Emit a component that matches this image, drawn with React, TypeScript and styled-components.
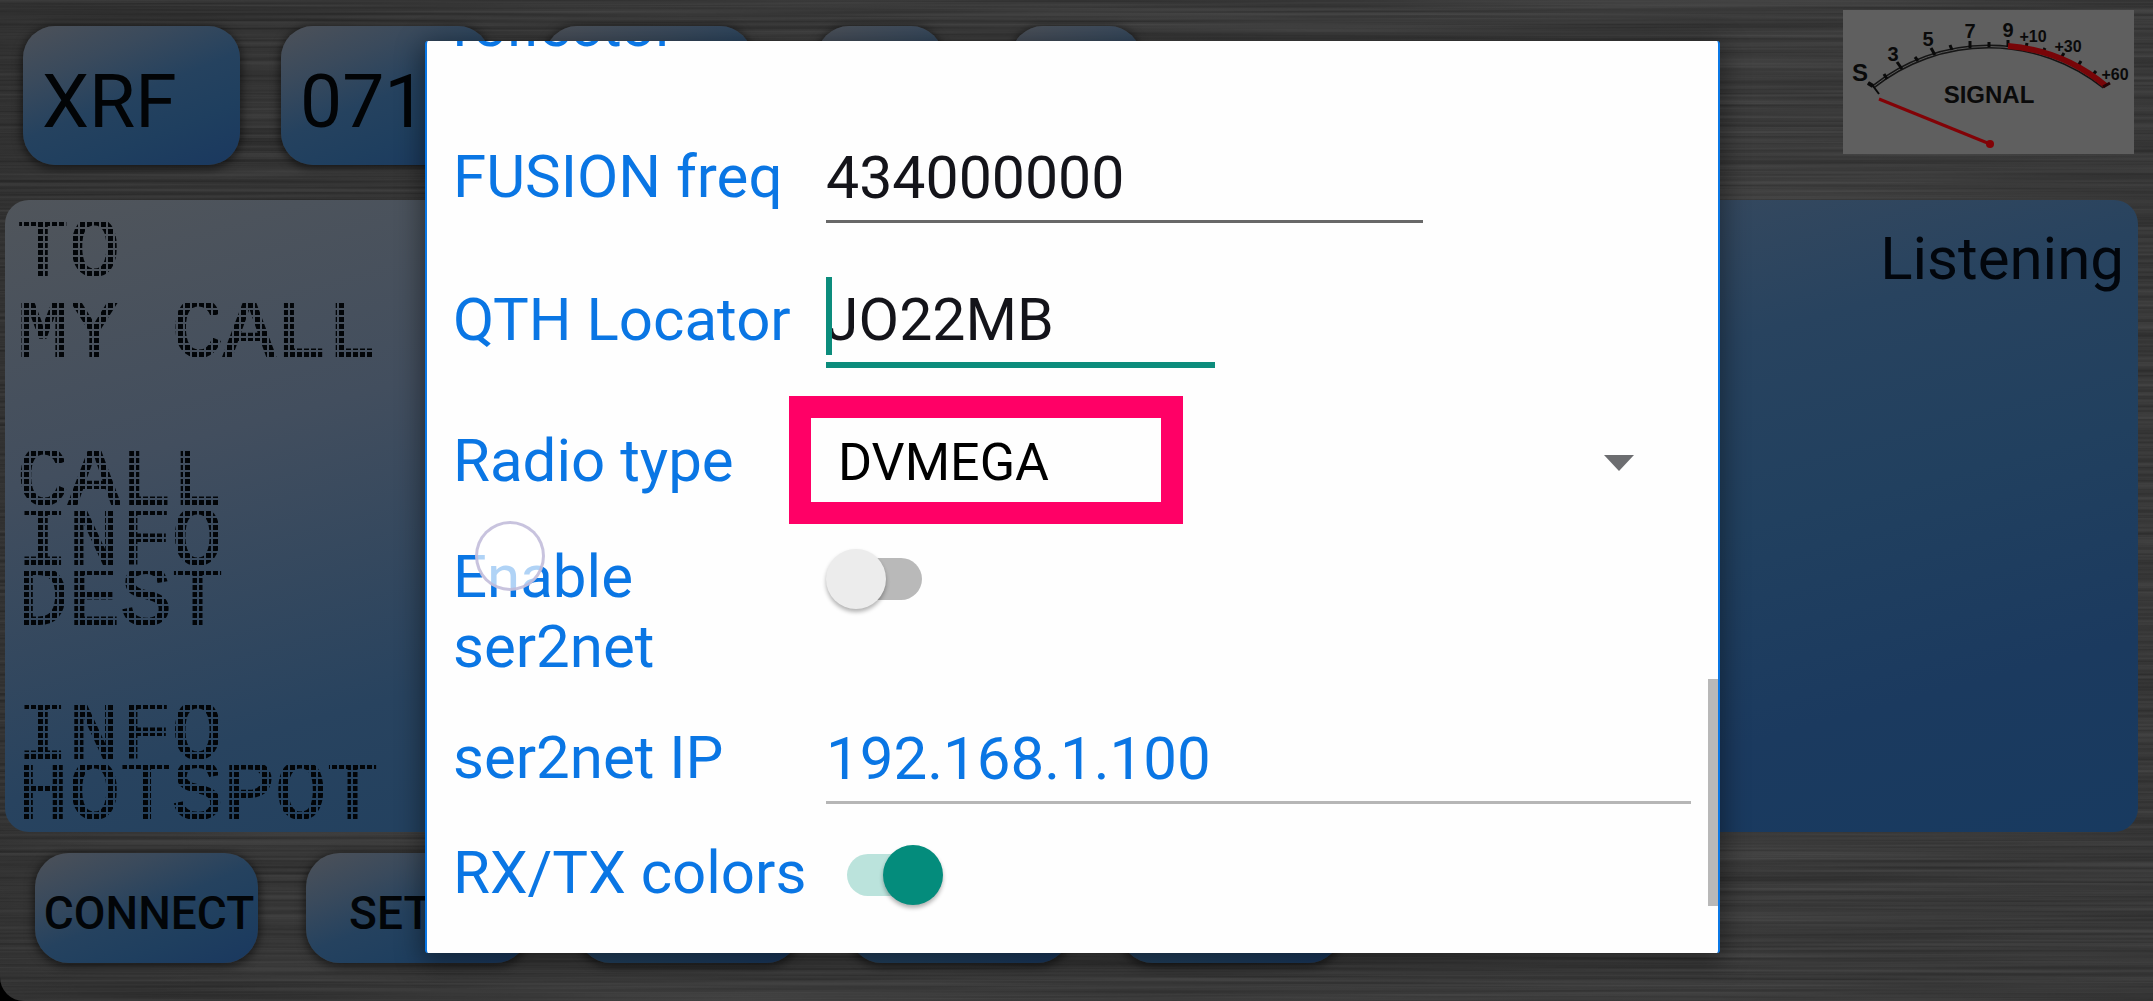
import React from 'react';
import styled, { createGlobalStyle, css } from 'styled-components';

const GlobalStyle = createGlobalStyle`
  *, *::before, *::after { box-sizing: border-box; }
  body { margin: 0; background: #000; font-family: Roboto, "Open Sans", sans-serif; }
  button, input, select { font-family: inherit; margin: 0; }
`;

const glass = css`
  background: linear-gradient(158deg, #4a5059 4%, #3a4a5c 26%, #25425f 50%, #1f3f5f 72%, #1a385f 100%);
`;

const Screen = styled.main`
  position: relative;
  display: flex;
  flex-direction: column;
  min-height: 100vh;
  overflow: hidden;
  border-bottom-left-radius: 24px;
  background: linear-gradient(100deg, #2e2e2e 0%, #393939 30%, #3c3c3c 70%, #363636 100%);
`;

const Brushed = styled.svg`
  position: absolute;
  inset: 0;
  width: 100%;
  height: 100%;
  opacity: 0.22;
`;

const TopBar = styled.header`
  position: relative;
  display: flex;
  justify-content: space-between;
  align-items: flex-start;
  height: 200px;
  padding: 10px 19px 0 23px;
`;

const Selectors = styled.div`
  display: grid;
  grid-template-columns: 258px 264px 272px 194px 130px;
  padding-top: 16px;
`;

const SelectorButton = styled.button<{ $width: number }>`
  ${glass}
  width: ${p => p.$width}px;
  height: 139px;
  padding: 10px 19px 0;
  border: 0;
  border-radius: 32px;
  box-shadow: 0 2px 8px 2px rgba(0, 0, 0, 0.5);
  color: #020406;
  font-size: 75px;
  line-height: 90px;
  text-align: left;
`;

const Meter = styled.svg`
  width: 291px;
  height: 144px;
  background: #5f5f5f;
`;

const Display = styled.section`
  position: relative;
  flex: 1;
  display: flex;
  justify-content: space-between;
  align-items: flex-start;
  margin: 0 15px 0 5px;
  padding: 10px 14px 0 12px;
  border-radius: 24px;
  background: linear-gradient(165deg, #50555b 0%, #424e5e 24%, #28435f 50%, #21405f 66%, #1b3a5f 84%, #183a60 100%);
`;

const Lines = styled.div`
  display: flex;
  flex-direction: column;
  padding-top: 12px;
`;

const LcdLine = styled.div<{ $gap?: number }>`
  height: 60px;
  margin-bottom: ${p => p.$gap ?? 0}px;
  color: #020508;
  font-family: "Liberation Mono", monospace;
  font-size: 86px;
  line-height: 60px;
  white-space: pre;
  -webkit-text-stroke: 2px #020508;
  mask-image: repeating-linear-gradient(90deg, #000 0 5px, transparent 5px 7px),
    repeating-linear-gradient(180deg, #000 0 5px, transparent 5px 7px);
  mask-composite: intersect;
`;

const Status = styled.div`
  padding-top: 14px;
  color: #02060c;
  font-size: 60px;
  line-height: 70px;
`;

const BottomBar = styled.footer`
  position: relative;
  display: flex;
  gap: 48px;
  height: 169px;
  padding: 21px 35px 0;
`;

const ActionButton = styled.button`
  ${glass}
  width: 223px;
  height: 110px;
  padding: 10px 0 0 5px;
  border: 0;
  border-radius: 34px;
  box-shadow: 0 2px 8px 2px rgba(0, 0, 0, 0.5);
  color: #020508;
  font-size: 46px;
  font-weight: 500;
  line-height: 52px;
  white-space: nowrap;
`;

const Overlay = styled.div`
  position: fixed;
  inset: 0;
  display: flex;
  padding: 41px 433px 48px 425px;
`;

const Dialog = styled.form`
  position: relative;
  flex: 1;
  min-width: 0;
  overflow: hidden;
  padding: 0 27px 0 26px;
  border: solid #0a78e6;
  border-width: 0 2px;
  border-radius: 3px;
  background: #fefefe;
  box-shadow: 0 6px 26px 4px rgba(0, 0, 0, 0.4);
`;

const Row = styled.div<{ $height: number }>`
  display: grid;
  grid-template-columns: 373px minmax(0, 1fr);
  align-items: start;
  height: ${p => p.$height}px;
`;

const ScrolledRow = styled(Row)`
  margin-top: -50px;
`;

const Label = styled.label`
  color: #0a76e4;
  font-size: 60px;
  line-height: 70px;
`;

const Field = styled.div<{ $width?: string }>`
  position: relative;
  width: ${p => p.$width ?? '100%'};
`;

const TextBox = styled.input<{ $tone: string; $rule: string; $size: number; $active?: boolean }>`
  display: block;
  width: 100%;
  height: ${p => (p.$active ? 83 : 81)}px;
  padding: 0 0 8px;
  border: 0;
  border-bottom: ${p => (p.$active ? 6 : 3)}px solid ${p => p.$rule};
  outline: 0;
  background: transparent;
  color: ${p => p.$tone};
  font-size: ${p => p.$size}px;
  line-height: 70px;
`;

const Caret = styled.span`
  position: absolute;
  left: 0;
  top: -8px;
  width: 6px;
  height: 78px;
  background: #0c8c7c;
`;

const SelectWrap = styled.div`
  display: grid;
  align-items: center;
  > * { grid-area: 1 / 1; }
`;

const Select = styled.select`
  width: 100%;
  height: 74px;
  padding: 0 0 0 12px;
  border: 0;
  outline: 0;
  appearance: none;
  background: transparent;
  color: #000;
  font-size: 52px;
  line-height: 70px;
`;

const Arrow = styled.svg`
  justify-self: end;
  width: 30px;
  height: 16px;
  margin-right: 57px;
  pointer-events: none;
`;

const Highlight = styled.div`
  position: absolute;
  left: -37px;
  top: -30px;
  width: 394px;
  height: 128px;
  border: 22px solid #ff0066;
  pointer-events: none;
`;

const Switch = styled.input<{ $indent?: number }>`
  position: relative;
  width: 96px;
  height: 60px;
  margin: 7px 0 0 ${p => p.$indent ?? 0}px;
  appearance: none;

  &::before {
    content: '';
    position: absolute;
    top: 9px;
    right: 0;
    width: 82px;
    height: 42px;
    border-radius: 21px;
    background: #b9b9b9;
  }
  &::after {
    content: '';
    position: absolute;
    top: 0;
    left: 0;
    width: 60px;
    height: 60px;
    border-radius: 50%;
    background: #ececec;
    box-shadow: 0 3px 4px rgba(0, 0, 0, 0.3);
  }
  &:checked::before { right: auto; left: 0; background: #bbe3dc; }
  &:checked::after { left: auto; right: 0; background: #048c7c; }
`;

const ScrollThumb = styled.div`
  position: absolute;
  right: -2px;
  top: 638px;
  width: 12px;
  height: 227px;
  border-right: 2px solid #284f86;
  background: #b8b8b8;
`;

const Touch = styled.div`
  position: absolute;
  left: 48px;
  top: 480px;
  width: 70px;
  height: 70px;
  border: 3px solid rgba(190, 184, 216, 0.85);
  border-radius: 50%;
  background: rgba(255, 255, 255, 0.68);
  pointer-events: none;
`;

const ticks = [
  [54, 52, 59, 59], [72, 47, 75, 51], [88, 38, 92, 45], [107, 35, 109, 40],
  [127, 31, 127, 38], [146, 32, 146, 37], [165, 30, 165, 37], [184, 33, 183, 38], [202, 38, 200, 42],
  [221, 43, 218, 48], [238, 51, 235, 56], [253, 61, 249, 66],
];

function SignalMeter() {
  return (
    <Meter viewBox="0 0 291 144" role="img" aria-label="Signal meter">
      <path d="M30 77 A185 185 0 0 1 261 77" fill="none" stroke="#151515" strokeWidth="4" />
      <path d="M30 77 A185 185 0 0 1 261 77" fill="none" stroke="#5a5a5a" strokeWidth="1" />
      <path d="M25 73 L30 76 L36 84" fill="none" stroke="#0a0a0a" strokeWidth="2" />
      <path d="M25 73 L30 76" stroke="#0a0a0a" strokeWidth="4" />
      <path d="M41 64 L44 69" stroke="#0a0a0a" strokeWidth="3" />
      {ticks.map(t => (
        <path key={t[0]} d={`M${t[0]} ${t[1]} L${t[2]} ${t[3]}`} stroke="#0a0a0a" strokeWidth="3" />
      ))}
      <path d="M165 36 A175 175 0 0 1 263 76" fill="none" stroke="#780508" strokeWidth="6" />
      <path d="M260 77 L267 73" stroke="#240305" strokeWidth="3" />
      <path d="M36 89 L147 134" stroke="#820206" strokeWidth="3" />
      <circle cx="147" cy="134" r="4" fill="#820206" />
      <g fill="#0a0a0a" fontFamily='"Liberation Sans", Arial, sans-serif' fontWeight="700" textAnchor="middle">
        <g fontSize="20">
          <text x="17" y="71" fontSize="24">S</text>
          <text x="50" y="51">3</text>
          <text x="85" y="36">5</text>
          <text x="127" y="28">7</text>
          <text x="165" y="27">9</text>
          <text x="146" y="93" fontSize="24">SIGNAL</text>
        </g>
        <g fontSize="16">
          <text x="190" y="32">+10</text>
          <text x="225" y="42">+30</text>
          <text x="272" y="70">+60</text>
        </g>
      </g>
    </Meter>
  );
}

const lcdLines: { text: string; gap?: number }[] = [
  { text: 'TO', gap: 21 },
  { text: 'MY CALL', gap: 88 },
  { text: 'CALL' },
  { text: 'INFO' },
  { text: 'DEST', gap: 74 },
  { text: 'INFO' },
  { text: 'HOTSPOT' },
];

export default function App() {
  return (
    <>
      <GlobalStyle />
      <Screen>
        <Brushed aria-hidden="true">
          <filter id="metal" x="0" y="0" width="100%" height="100%" colorInterpolationFilters="sRGB">
            <feTurbulence type="fractalNoise" baseFrequency="0.002 0.3" numOctaves="3" seed="4" />
            <feColorMatrix values="0.6 0 0 0 -0.06  0.6 0 0 0 -0.06  0.6 0 0 0 -0.06  0 0 0 0 1" />
          </filter>
          <rect width="100%" height="100%" filter="url(#metal)" />
        </Brushed>

        <TopBar>
          <Selectors>
            <SelectorButton type="button" $width={217}>XRF</SelectorButton>
            <SelectorButton type="button" $width={209}>071</SelectorButton>
            <SelectorButton type="button" $width={207} aria-label="Server" />
            <SelectorButton type="button" $width={126} aria-label="Module" />
            <SelectorButton type="button" $width={130} aria-label="Local module" />
          </Selectors>
          <SignalMeter />
        </TopBar>

        <Display>
          <Lines>
            {lcdLines.map((line, i) => (
              <LcdLine key={i} $gap={line.gap}>{line.text}</LcdLine>
            ))}
          </Lines>
          <Status>Listening</Status>
        </Display>

        <BottomBar>
          <ActionButton type="button">CONNECT</ActionButton>
          <ActionButton type="button">SETUP</ActionButton>
          <ActionButton type="button" aria-label="Log" />
          <ActionButton type="button" aria-label="Info" />
          <ActionButton type="button" aria-label="Exit" />
        </BottomBar>
      </Screen>

      <Overlay>
        <Dialog role="dialog" aria-label="Settings">
          <ScrolledRow $height={151}>
            <Label as="div">reflector</Label>
          </ScrolledRow>
          <Row $height={143}>
            <Label htmlFor="fusion">FUSION freq</Label>
            <Field $width="69%">
              <TextBox id="fusion" defaultValue="434000000" $size={59} $tone="#14141a" $rule="#686868" />
            </Field>
          </Row>
          <Row $height={141}>
            <Label htmlFor="qth">QTH Locator</Label>
            <Field $width="45%">
              <TextBox id="qth" defaultValue="JO22MB" $size={59} $tone="#14141a" $rule="#0c8c7c" $active />
              <Caret />
            </Field>
          </Row>
          <Row $height={116}>
            <Label htmlFor="radio">Radio type</Label>
            <Field>
              <SelectWrap>
                <Select id="radio" defaultValue="DVMEGA">
                  <option>DVMEGA</option>
                </Select>
                <Arrow viewBox="0 0 30 16" aria-hidden="true">
                  <path d="M0 0 H30 L15 16 Z" fill="#6c6d70" />
                </Arrow>
              </SelectWrap>
              <Highlight />
            </Field>
          </Row>
          <Row $height={181}>
            <Label htmlFor="ser2net">Enable<br />ser2net</Label>
            <Switch id="ser2net" type="checkbox" />
          </Row>
          <Row $height={115}>
            <Label htmlFor="ip">ser2net IP</Label>
            <Field>
              <TextBox id="ip" defaultValue="192.168.1.100" $size={60} $tone="#0a76e4" $rule="#b6b6b6" />
            </Field>
          </Row>
          <Row $height={116}>
            <Label htmlFor="colors">RX/TX colors</Label>
            <Switch id="colors" type="checkbox" defaultChecked $indent={21} />
          </Row>
          <Touch />
          <ScrollThumb />
        </Dialog>
      </Overlay>
    </>
  );
}
